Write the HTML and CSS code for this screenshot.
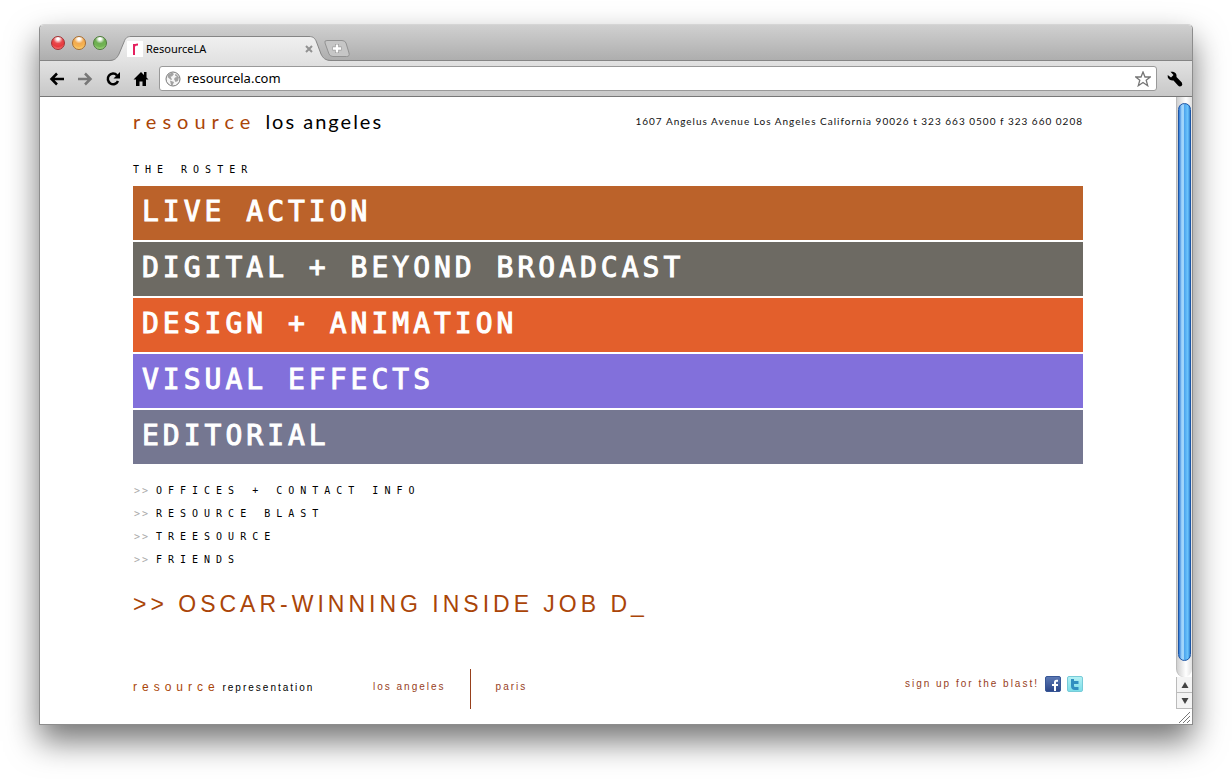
FILE: index.html
```html
<!DOCTYPE html>
<html lang="en">
<head>
<meta charset="utf-8">
<title>ResourceLA</title>
<link rel="stylesheet" href="styles.css">
</head>
<body>
<div class="window">
  <div class="titlebar">
    <div class="lights">
      <button class="light red" aria-label="Close"></button>
      <button class="light amber" aria-label="Minimize"></button>
      <button class="light green" aria-label="Zoom"></button>
    </div>
    <div class="tab">
      <svg class="tab-shape" viewBox="0 0 230 25" aria-hidden="true">
        <defs><linearGradient id="tabfill" x1="0" y1="0" x2="0" y2="1"><stop offset="0" stop-color="#f0f0f0"/><stop offset="1" stop-color="#e2e2e2"/></linearGradient></defs>
        <path d="M0 25C6 24.500 8 22 10 18L15 6C16.500 2 18 .5 22 .5H200C204 .5 206 2 207.500 6L212 18C214 22 216 24.500 223 25Z" fill="url(#tabfill)"/>
        <path d="M0 24.500C6 24.500 8 22 10 18L15 6C16.500 2 18 .5 22 .5H200C204 .5 206 2 207.500 6L212 18C214 22 216 24.500 223 24.500" fill="none" stroke="#858585"/>
      </svg>
      <svg class="favicon" viewBox="0 0 16 16" aria-hidden="true"><path fill="#fff" d="M0 0h16v16H0z"/><path d="M7 14V3M7 5.500Q7.500 3.500 11 3.500" fill="none" stroke="#e5205f" stroke-width="2"/></svg>
      <span class="tab-title">ResourceLA</span>
      <button class="tab-close" aria-label="Close tab"><svg viewBox="0 0 8 8"><path d="M1 1l6 6M7 1L1 7" stroke="#929292" stroke-width="2"/></svg></button>
    </div>
    <button class="new-tab" aria-label="New tab"><svg viewBox="0 0 26 17"><path d="M3 .5H18Q21 .5 22 3L25 13Q26 16.500 22.500 16.500H9Q6 16.500 5 14L1 3Q0 .5 3 .5Z" fill="#c6c6c6" stroke="#929292"/><path d="M13 4v9M8.500 8.500h9" stroke="#999" stroke-width="4"/><path d="M13 4.500v8M9 8.500h8" stroke="#fff" stroke-width="2.500"/></svg></button>
  </div>
  <div class="toolbar">
    <nav class="nav-buttons">
      <button class="tool" aria-label="Back"><svg viewBox="0 0 16 16"><path d="M15 8H3M8 2.500L2.500 8L8 13.500" fill="none" stroke="#000" stroke-width="2.500"/></svg></button>
      <button class="tool" aria-label="Forward"><svg viewBox="0 0 16 16"><path d="M1 8h12M8 2.500L13.500 8L8 13.500" fill="none" stroke="#777" stroke-width="2.500"/></svg></button>
      <button class="tool" aria-label="Reload"><svg viewBox="0 0 16 16"><path d="M12 4.300A5.300 5.300 0 1 0 13 10" fill="none" stroke="#000" stroke-width="2.500"/><path d="M15 1v6.500H8.500Z"/></svg></button>
      <button class="tool" aria-label="Home"><svg viewBox="0 0 16 16"><path d="M8 1L.5 8.500H3V15h3.500v-4.500h3V15H13V8.500h2.500L13.500 6.500V1H11v3Z"/></svg></button>
    </nav>
    <label class="address-bar">
      <svg class="globe" viewBox="0 0 16 16" aria-hidden="true"><circle cx="8" cy="8" r="7" fill="#f5f5f5" stroke="#777"/><path d="M3 3.500L7 1.500L9 3L7 5.500L5.500 5.500L7 8.500L6 9L2.500 6ZM10.500 2.500L14 6L13 10L10.500 11L9 8L10 6.500L12 6L10 4.500ZM5 9.500L9 11L7.500 14.500L6 14Z" fill="#a2a2a2"/></svg>
      <input class="url" type="text" value="resourcela.com" aria-label="Address">
      <svg class="star" viewBox="0 0 16 16" aria-hidden="true"><path d="M8 1L10 6H15.300L11.200 9.200L12.700 14.700L8 11.500L3.300 14.700L4.800 9.200L.7 6H6Z" fill="#fff" stroke="#757575" stroke-width="1.300"/></svg>
    </label>
    <button class="tool" aria-label="Settings"><svg viewBox="0 0 16 16"><path d="M3.500.8L6 .7Q10 1.500 9.500 6L14.800 11.500Q16 13.500 14.500 15Q12.500 16 11 14.500L6.500 9.500Q2.500 10 .8 6.500L.7 4L4 6.500L6.500 4Z"/></svg></button>
  </div>
  <div class="viewport">
    <main class="page">
      <header class="header">
        <h1 class="logo"><span class="brand">resource</span> <span class="city">los angeles</span></h1>
        <address class="contact">1607 Angelus Avenue Los Angeles California 90026 t 323 663 0500 f 323 660 0208</address>
      </header>
      <h2 class="section-title">THE ROSTER</h2>
      <nav class="roster">
        <a class="bar live" href="#">LIVE ACTION</a>
        <a class="bar digital" href="#">DIGITAL + BEYOND BROADCAST</a>
        <a class="bar design" href="#">DESIGN + ANIMATION</a>
        <a class="bar effects" href="#">VISUAL EFFECTS</a>
        <a class="bar editorial" href="#">EDITORIAL</a>
      </nav>
      <nav class="links">
        <a class="link" href="#"><span class="chevrons">&gt;&gt;</span>OFFICES + CONTACT INFO</a>
        <a class="link" href="#"><span class="chevrons">&gt;&gt;</span>RESOURCE BLAST</a>
        <a class="link" href="#"><span class="chevrons">&gt;&gt;</span>TREESOURCE</a>
        <a class="link" href="#"><span class="chevrons">&gt;&gt;</span>FRIENDS</a>
      </nav>
      <p class="ticker">&gt;&gt; OSCAR-WINNING INSIDE JOB D_</p>
      <footer class="footer">
        <p class="rep"><span class="rep-brand">resource</span> <span class="rep-name">representation</span></p>
        <a class="office" href="#">los angeles</a>
        <a class="office paris" href="#">paris</a>
        <div class="signup">
          <a class="office" href="#">sign up for the blast!</a>
          <a class="social" href="#" aria-label="Facebook"><svg viewBox="0 0 16 16"><defs><linearGradient id="fb" x1="0" y1="0" x2="0" y2="1"><stop offset="0" stop-color="#5d7ab5"/><stop offset="1" stop-color="#2b4688"/></linearGradient></defs><rect x=".5" y=".5" width="15" height="15" rx="1.500" fill="url(#fb)" stroke="#385796"/><path d="M13 4.800H11.500Q10 4.800 10 6.500V15M7 9h6" fill="none" stroke="#fff" stroke-width="2"/></svg></a>
          <a class="social" href="#" aria-label="Twitter"><svg viewBox="0 0 16 16"><defs><linearGradient id="tw" x1="0" y1="0" x2="0" y2="1"><stop offset="0" stop-color="#b5f1f4"/><stop offset="1" stop-color="#7bdde8"/></linearGradient></defs><rect x=".5" y=".5" width="15" height="15" rx="1.500" fill="url(#tw)" stroke="#78cbd8"/><path d="M5.500 3v7Q5.500 12.500 8 12.500H11.500M5.500 6.500h6" fill="none" stroke="#318fc0" stroke-width="3"/></svg></a>
        </div>
      </footer>
    </main>
    <div class="scrollbar">
      <div class="track"><div class="thumb"></div></div>
      <button class="arrow" aria-label="Scroll up"><svg viewBox="0 0 8 8"><path d="M4 1L7.500 7H.5Z" fill="#444"/></svg></button>
      <button class="arrow" aria-label="Scroll down"><svg viewBox="0 0 8 8"><path d="M4 7L7.500 1H.5Z" fill="#444"/></svg></button>
      <svg class="grip" viewBox="0 0 15 15" aria-hidden="true"><path d="M3 14L14 3M7 14L14 7M11 14L14 11" stroke="#777"/></svg>
    </div>
  </div>
</div>
</body>
</html>
```
FILE: styles.css
```css
* { box-sizing: border-box; }
body {
  margin: 0;
  min-height: 100vh;
  padding: 24px 39px 54px;
  display: flex;
  background: #fff;
  font-family: "Liberation Sans", Arial, sans-serif;
}
button { padding: 0; border: 0; background: none; display: block; }
svg { display: block; width: 100%; height: 100%; }
a { text-decoration: none; }
h1, h2, p { margin: 0; font-weight: normal; }

.window {
  flex: 1;
  display: flex;
  flex-direction: column;
  border: 1px solid #8d8d8d;
  border-top-color: #d5d5d5;
  border-radius: 5px 5px 0 0;
  background: #fff;
  box-shadow: 0 16px 32px rgba(0, 0, 0, .55);
}
.titlebar {
  display: flex;
  align-items: flex-end;
  height: 36px;
  border-radius: 4px 4px 0 0;
  background: linear-gradient(#d0d0d0, #adadad);
  box-shadow: inset 0 -1px #858585;
}
.lights { display: flex; gap: 7px; padding: 0 5px 11px 11px; }
.light { width: 14px; height: 14px; border-radius: 50%; border: 1px solid #777; }
.red { background: radial-gradient(circle at 50% 15%, #fff 0 10%, #e8494c 40%, #e8383c 65%, #ff9a94); border-color: #a03033; }
.amber { background: radial-gradient(circle at 50% 15%, #fff 0 10%, #f2aa50 40%, #f6b452 65%, #ffe98d); border-color: #a86b2d; }
.green { background: radial-gradient(circle at 50% 15%, #fff 0 10%, #6eae52 40%, #72b553 65%, #c5eea0); border-color: #4b7a38; }
.tab {
  position: relative;
  display: flex;
  align-items: center;
  width: 230px;
  height: 25px;
  margin-left: -3px;
  padding: 0 26px 0 18px;
}
.tab-shape { position: absolute; inset: 0; }
.favicon { position: relative; width: 16px; height: 16px; }
.tab-title { position: relative; flex: 1; padding-left: 3px; font: 11px/16px "Noto Sans", sans-serif; color: #000; }
.tab-close { position: relative; width: 8px; height: 8px; }
.new-tab { width: 26px; height: 17px; margin: 0 0 4px -15px; z-index: 1; }

.toolbar {
  display: flex;
  align-items: center;
  gap: 10px;
  height: 36px;
  padding: 0 9px;
  background: linear-gradient(#e2e2e2, #c8c8c8);
  border-bottom: 1px solid #777;
}
.nav-buttons { display: flex; gap: 12px; }
.tool { width: 16px; height: 16px; }
.address-bar {
  flex: 1;
  display: flex;
  align-items: center;
  gap: 6px;
  height: 25px;
  padding: 0 5px;
  border: 1px solid #999;
  border-radius: 3px;
  background: #fff;
}
.globe, .star { width: 16px; height: 16px; }
.url { flex: 1; min-width: 0; padding: 0 0 2px; border: 0; outline: 0; background: none; font: 13px/20px "Noto Sans", sans-serif; color: #000; }

.viewport { flex: 1; display: flex; }
.page { flex: 0 1 950px; margin: 0 auto; padding-bottom: 15px; }
.header { display: flex; align-items: center; justify-content: space-between; height: 48px; font-family: Lato, sans-serif; }
.logo { display: flex; align-items: baseline; gap: 9px; font-size: 20px; color: #000; }
.brand { color: #aa4508; letter-spacing: 6px; }
.city { letter-spacing: 2px; }
.contact { font-size: 10px; font-style: normal; letter-spacing: 1px; color: #111; }
.section-title { margin: 14px 0 5px; font: 10px/22px "DejaVu Sans Mono", monospace; letter-spacing: 6px; color: #000; }
.roster { display: grid; gap: 2px; }
.bar {
  height: 54px;
  padding: 0 9px;
  font: 28px/52px "DejaVu Sans Mono", monospace;
  letter-spacing: 4px;
  color: #fff;
  -webkit-text-stroke: 1px #fff;
}
.live { background: #bb622a; }
.digital { background: #6d6a63; }
.design { background: #e35f2c; }
.effects { background: #8270db; }
.editorial { background: #757791; }
.links { display: grid; justify-items: start; margin-top: 15px; }
.link { font: 10px/23px "DejaVu Sans Mono", monospace; letter-spacing: 6px; color: #000; }
.chevrons { display: inline-block; width: 23px; padding-left: 1px; letter-spacing: 2px; color: #aaa; }
.ticker { margin-top: 19px; font-size: 23px; line-height: 28px; letter-spacing: 4px; color: #aa4508; }
.footer { display: flex; height: 40px; margin-top: 51px; font-size: 10px; line-height: 36px; }
.rep { width: 240px; color: #000; }
.rep-brand { font-size: 12px; letter-spacing: 5px; color: #aa4508; }
.rep-name { letter-spacing: 2px; }
.office { color: #97401c; letter-spacing: 2px; }
.paris { margin-left: 24px; padding-left: 25px; border-left: 1px solid #97401c; }
.signup { display: flex; align-items: center; gap: 6px; height: 30px; margin-left: auto; }
.social { width: 16px; height: 16px; }

.scrollbar { display: flex; flex-direction: column; width: 16px; }
.track { flex: 1; padding: 6px 1px 16px; border-left: 1px solid #bbb; background: linear-gradient(90deg, #d0d0d0, #fff 60%, #e0e0e0); border-radius: 0 0 8px 8px; }
.thumb { height: 100%; border-radius: 7px; border: 1px solid #1c55a4; background: linear-gradient(90deg, #2c76d6, #9cd2fa 25%, #a9dafb 40%, #4ea6ee 50%, #6cc5fc 80%, #2e80d2); }
.arrow { display: grid; place-items: center; height: 16px; border: 1px solid #bbb; border-width: 0 0 1px 1px; background: #f4f4f4; }
.arrow svg { width: 8px; height: 8px; }
.grip { width: 15px; height: 15px; }
```
